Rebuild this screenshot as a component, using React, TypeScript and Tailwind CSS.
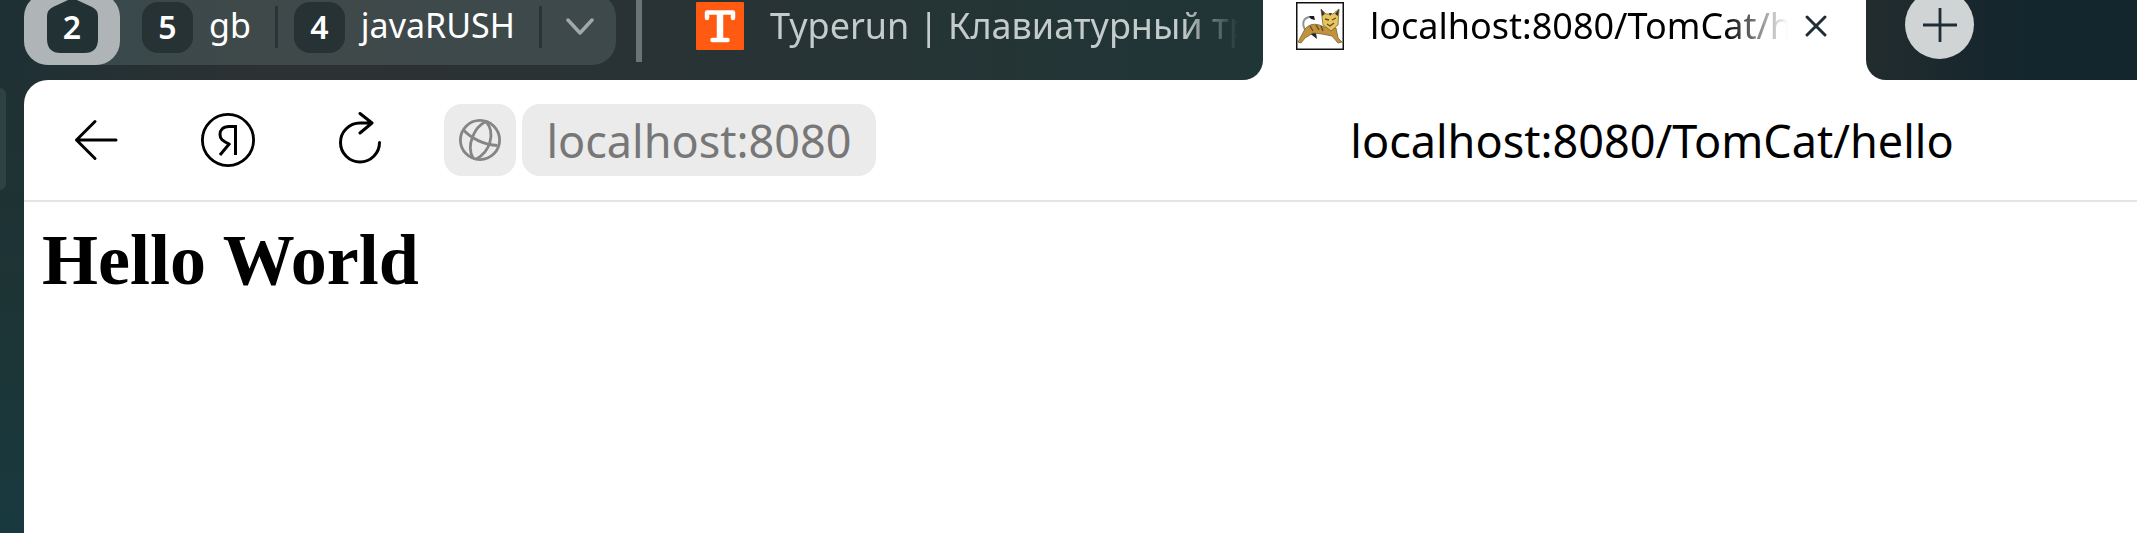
import React from "react";

const sans = "font-['Noto_Sans',sans-serif]";

function HouseBadge({ count }: { count: number }) {
  return (
    <span className="grid h-[53px] w-[51px] place-items-center">
      <svg viewBox="0 0 51 53" className="col-start-1 row-start-1 h-[53px] w-[51px]" aria-hidden="true">
        <path
          d="M20 0.500Q25.500 -2 31 0.500L45 7Q51 10 51 16V39Q51 53 37 53H14Q0 53 0 39V16Q0 10 6 7Z"
          fill="#213134"
        />
      </svg>
      <span className="col-start-1 row-start-1 text-[32px] leading-[52px] font-semibold text-white">{count}</span>
    </span>
  );
}

function TabGroup({ count, name }: { count: number; name: string }) {
  return (
    <button type="button" className="flex items-start gap-4 text-white">
      <span className="mt-px h-[51px] w-[51px] rounded-2xl bg-[#263234] text-center text-[32px] leading-[50px] font-semibold">
        {count}
      </span>
      <span className="text-[34px] leading-[48px]">{name}</span>
    </button>
  );
}

function TyperunIcon() {
  return (
    <svg viewBox="0 0 48 48" className="h-12 w-12 shrink-0" aria-hidden="true">
      <rect width="48" height="48" rx="1" fill="#ff5a12" />
      <path
        d="M11 16V10.500H37V16M24 10.500V38M16.500 38H31.500"
        fill="none"
        stroke="#fff"
        strokeWidth="4.500"
        strokeLinecap="round"
        strokeLinejoin="round"
      />
      <path d="M24 11V38" stroke="#fff" strokeWidth="6.500" />
    </svg>
  );
}

function TomcatIcon() {
  return (
    <svg viewBox="0 0 48 48" className="h-12 w-12 shrink-0" aria-hidden="true">
      <rect x="0.750" y="0.750" width="46.500" height="46.500" fill="#fff" stroke="#111" strokeWidth="1.500" />
      <path d="M10 29C5 22 7 15 15 15" fill="none" stroke="#8d9494" strokeWidth="2" />
      <path d="M13 14L18 14L19 18L15 17Z" fill="#15181c" />
      <path d="M12 30L21 37L20 31L16 29Z" fill="#20262e" />
      <path
        d="M2 40L9 27C15 20 22 22 28 25L40 26L42 36L46 40L42 41L36 34L26 32L17 31L9 36L5 41Z"
        fill="#c4923a"
        stroke="#75633a"
        strokeWidth="0.800"
      />
      <path d="M25 7L30 12H37L43 7L42 23L35 29L27 23Z" fill="#e9c55c" stroke="#75633a" strokeWidth="0.800" />
      <path d="M25 7L29 12L26 14ZM43 7L39 12L42 14ZM33 11H36L34 14Z" fill="#39352c" />
      <path d="M29 17L33 18M36 18L40 16M31 22L34 24L38 21M20 23L23 28M25 24L27 29M14 24L17 29" stroke="#5b4c2a" strokeWidth="1.300" fill="none" />
    </svg>
  );
}

function BackIcon() {
  return (
    <svg viewBox="0 0 44 44" className="h-11 w-11" fill="none" stroke="#000" strokeWidth="3" strokeLinecap="round" strokeLinejoin="round" aria-hidden="true">
      <path d="M42 22H2.500M21 3.500L2.500 22L21 40.500" />
    </svg>
  );
}

function YandexIcon() {
  return (
    <svg viewBox="0 0 54 54" className="h-[54px] w-[54px]" fill="none" stroke="#000" strokeWidth="2.800" aria-hidden="true">
      <circle cx="27" cy="27" r="25.600" />
      <path d="M34.500 42V13.500H28C22 13.500 19 17 19 21.500C19 26 21.500 28 28 31M29 30L19 42" strokeWidth="3" />
    </svg>
  );
}

function ReloadIcon() {
  return (
    <svg viewBox="0 0 44 52" className="h-[52px] w-11" fill="none" stroke="#000" strokeWidth="3" strokeLinecap="round" strokeLinejoin="round" aria-hidden="true">
      <path d="M41.500 30.500A19.500 19.500 0 1 1 22 11H34M22 1.500L34 11L22 21" />
    </svg>
  );
}

function GlobeIcon() {
  return (
    <svg viewBox="0 0 44 44" className="h-11 w-11" fill="none" stroke="#858585" strokeWidth="2.800" aria-hidden="true">
      <circle cx="22" cy="22" r="19.600" />
      <path d="M28 3.500C16 9 8 28 15 40M28 3.500C38 15 32 34 18 41.200M6 12.500C13 20 26 27 39.500 27.500" />
    </svg>
  );
}

export default function App() {
  return (
    <div className={`flex min-h-screen flex-col overflow-hidden bg-linear-to-b from-[#203033] from-15% via-[#1c3536] via-65% to-[#18393f] text-black ${sans}`}>
      <header className="flex h-20">
        <div className="flex w-[1263px] shrink-0 bg-linear-to-r from-[#1e3034] from-60% to-white to-60%">
          <nav
            aria-label="Tabs"
            className="flex w-full items-start rounded-br-[20px] bg-linear-to-r from-[#1e3034] via-[#2d3133] via-22% to-[#203536] pl-6"
          >
            <div className="-mt-[7px] flex h-[72px] items-center rounded-[24px] bg-[#b8dcdc]/14 pr-[22px]">
              <button type="button" aria-label="Home tabs" className="mr-[22px] flex h-[72px] w-24 justify-center rounded-[24px] bg-[#afb5b6] pt-[7px]">
                <HouseBadge count={2} />
              </button>
              <div className="flex items-center pt-[7px] pb-3">
                <TabGroup count={5} name="gb" />
                <span className="mr-4 ml-6 h-[42px] w-[3px] bg-[#283436]" />
                <TabGroup count={4} name="javaRUSH" />
                <span className="mr-6 ml-6 h-[42px] w-[3px] bg-[#283436]" />
                <button type="button" aria-label="Show groups">
                  <svg viewBox="0 0 28 18" className="h-[18px] w-7" fill="none" stroke="#a0a8a9" strokeWidth="3.500" strokeLinecap="round" strokeLinejoin="round" aria-hidden="true">
                    <path d="M2 2L14 15L26 2" />
                  </svg>
                </button>
              </div>
            </div>
            <span className="ml-5 h-[62px] w-[6px] shrink-0 bg-[#697475]" />
            <button type="button" className="ml-[54px] flex h-[52px] min-w-0 flex-1 items-center gap-[26px] pr-6 text-[#c3cbcb]">
              <TyperunIcon />
              <span className="min-w-0 flex-1 overflow-hidden mask-r-from-88% mask-r-to-100% text-left text-[36px] leading-[52px] whitespace-nowrap">
                Typerun | Клавиатурный тр
              </span>
            </button>
          </nav>
        </div>
        <div className="flex w-[603px] shrink-0 bg-white">
          <div className="flex h-[52px] w-full items-center pr-[38px] pl-[33px]">
            <TomcatIcon />
            <span className="ml-[26px] min-w-0 flex-1 overflow-hidden mask-r-from-85% mask-r-to-100% text-[36px] leading-[52px] whitespace-nowrap">
              localhost:8080/TomCat/h
            </span>
            <button type="button" aria-label="Close tab" className="ml-4">
              <svg viewBox="0 0 24 24" className="h-6 w-6" fill="none" stroke="#1f2d36" strokeWidth="3" strokeLinecap="round" aria-hidden="true">
                <path d="M3 3L21 21M21 3L3 21" />
              </svg>
            </button>
          </div>
        </div>
        <div className="flex-1 bg-white">
          <div className="flex h-20 items-start rounded-bl-[20px] bg-linear-to-r from-[#222c2e] to-[#13252d] to-60% pl-[39px]">
            <button type="button" aria-label="New tab" className="-mt-[10px] flex h-[69px] w-[69px] items-center justify-center rounded-full bg-[#d0d4d5]">
              <svg viewBox="0 0 34 34" className="h-[34px] w-[34px]" stroke="#1f2d36" strokeWidth="2.800" aria-hidden="true">
                <path d="M17 0V34M0 17H34" />
              </svg>
            </button>
          </div>
        </div>
      </header>
      <div className="flex flex-1">
        <aside className="w-6 shrink-0 pt-2">
          <div className="h-[102px] w-[6px] rounded-r-md bg-[#2e4245]" />
        </aside>
        <div className="flex min-w-0 flex-1 flex-col rounded-tl-[24px] bg-white">
          <div className="flex h-[122px] items-center border-b-2 border-[#e4e4e4]">
            <button type="button" aria-label="Back" className="ml-[50px]"><BackIcon /></button>
            <button type="button" aria-label="Yandex" className="ml-[83px]"><YandexIcon /></button>
            <button type="button" aria-label="Reload" className="ml-[83px] pb-1"><ReloadIcon /></button>
            <button type="button" aria-label="Site information" className="ml-[62px] flex h-[72px] w-[72px] items-center justify-center rounded-[18px] bg-[#ebebeb]">
              <GlobeIcon />
            </button>
            <a href="#" className="ml-[6px] flex h-[72px] w-[354px] items-center justify-center rounded-[18px] bg-[#ebebeb] text-[45px] leading-none text-[#777]">
              localhost:8080
            </a>
            <span className="flex-1 pl-[291px] text-center text-[45px] leading-none whitespace-nowrap">localhost:8080/TomCat/hello</span>
          </div>
          <main className="px-[18px] pt-[22px]">
            <h1 className="font-['Liberation_Serif',serif] text-[72px] leading-[72px] font-bold">Hello World</h1>
          </main>
        </div>
      </div>
    </div>
  );
}
